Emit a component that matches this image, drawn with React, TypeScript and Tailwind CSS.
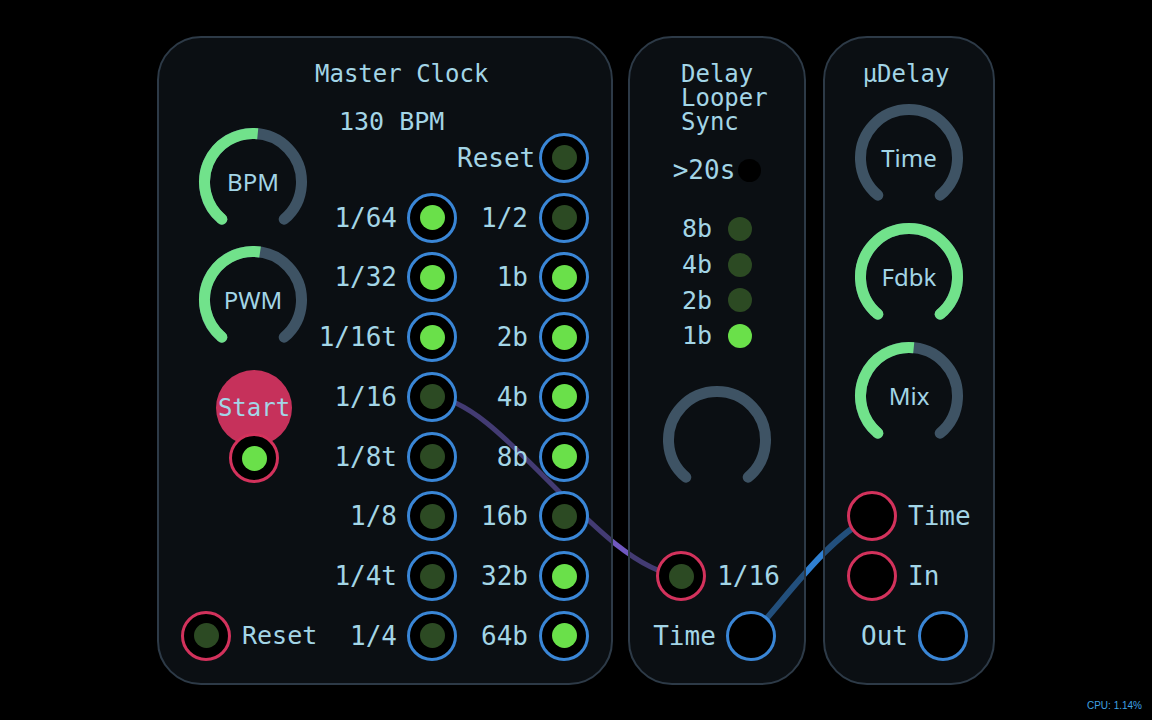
import React from 'react';

const MONO = "font-['DejaVu_Sans_Mono',monospace]";

function Knob({ value, label }: { value: number; label?: string }) {
  const cx = 55, cy = 55, r = 48.5;
  const start = -140, sweep = 280;
  const pt = (a: number) => {
    const rad = (a * Math.PI) / 180;
    return [cx + r * Math.sin(rad), cy - r * Math.cos(rad)];
  };
  const arc = (a0: number, a1: number) => {
    const [x0, y0] = pt(a0);
    const [x1, y1] = pt(a1);
    const large = a1 - a0 > 180 ? 1 : 0;
    return `M ${x0} ${y0} A ${r} ${r} 0 ${large} 1 ${x1} ${y1}`;
  };
  const end = start + sweep * value;
  const [sx, sy] = pt(start);
  const [ex, ey] = pt(start + sweep);
  return (
    <div className="relative w-[110px] h-[110px] shrink-0 flex items-center justify-center">
      <svg width="110" height="110" viewBox="0 0 110 110" className="absolute inset-0">
        <path d={arc(start, start + sweep)} fill="none" stroke="#3e5364" strokeWidth="11" strokeLinecap="round" />
        {value > 0 && (
          <>
            <path d={arc(start, end)} fill="none" stroke="#71e28b" strokeWidth="11" />
            <circle cx={sx} cy={sy} r="5.5" fill="#71e28b" />
            {value >= 1 && <circle cx={ex} cy={ey} r="5.5" fill="#71e28b" />}
          </>
        )}
      </svg>
      {label && (
        <span className="relative text-[24px] leading-none text-[#a3d5e6] font-['Noto_Sans',sans-serif]">{label}</span>
      )}
    </div>
  );
}

function Jack({ ring, led }: { ring: 'blue' | 'pink'; led?: 'on' | 'off' }) {
  return (
    <div
      className={`relative w-[50px] h-[50px] shrink-0 rounded-full border-[3.5px] bg-black flex items-center justify-center ${
        ring === 'blue' ? 'border-[#3a86d6]' : 'border-[#d3325c]'
      }`}
    >
      {led && <div className={`w-[25px] h-[25px] rounded-full ${led === 'on' ? 'bg-[#6ae04a]' : 'bg-[#2c4a23]'}`} />}
    </div>
  );
}

function Led({ on }: { on: boolean }) {
  return <div className={`w-[24px] h-[24px] rounded-full shrink-0 ${on ? 'bg-[#6ae04a]' : 'bg-[#2c4a23]'}`} />;
}

type Cell = [string, 'on' | 'off'] | null;

const rows: [Cell, Cell][] = [
  [null, ['Reset', 'off']],
  [['1/64', 'on'], ['1/2', 'off']],
  [['1/32', 'on'], ['1b', 'on']],
  [['1/16t', 'on'], ['2b', 'on']],
  [['1/16', 'off'], ['4b', 'on']],
  [['1/8t', 'off'], ['8b', 'on']],
  [['1/8', 'off'], ['16b', 'off']],
  [['1/4t', 'off'], ['32b', 'on']],
  [['1/4', 'off'], ['64b', 'on']],
];

const panel = 'relative h-[649px] rounded-[44px] border-2 border-[#2d3a47] bg-[rgba(22,30,38,0.5)] flex flex-col shrink-0';

export default function App() {
  return (
    <div className={`relative w-[1152px] h-[720px] bg-black overflow-hidden flex flex-col text-[#a3d5e6] ${MONO}`}>
      {/* patch cables, under the panels */}
      <svg className="absolute inset-0" width="1152" height="720">
        <path d="M432 397 C 500 397, 600 570, 681 576" fill="none" stroke="#7058c0" strokeWidth="5" />
        <path d="M751 636 C 785 600, 825 540, 872 516" fill="none" stroke="#2f80d2" strokeWidth="6" />
      </svg>

      <div className="flex pt-[36px] pl-[157px]">
        {/* Master Clock */}
        <div className={`${panel} w-[456px]`}>
          <div className="mt-[24px] ml-[156px] text-[24px] leading-[24px]">Master Clock</div>
          <div className="mt-[24px] ml-[180px] text-[25px] leading-[24px]">130 BPM</div>
          <div className="-mt-[6px] flex">
            <div className="w-[159px] flex flex-col">
              <div className="-mt-[1px] ml-[39px]">
                <Knob value={0.52} label="BPM" />
              </div>
              <div className="mt-[8px] ml-[39px]">
                <Knob value={0.53} label="PWM" />
              </div>
              <div className="mt-[15px] ml-[57px] w-[76px] h-[76px] rounded-full bg-[#c6315b] flex items-center justify-center text-[24px]">
                Start
              </div>
              <div className="-mt-[13px] ml-[70px]">
                <Jack ring="pink" led="on" />
              </div>
              <div className="flex-1" />
              <div className="h-[59.75px] flex items-center pl-[22px] gap-[11px]">
                <Jack ring="pink" led="off" />
                <span className="text-[25px]">Reset</span>
              </div>
            </div>
            <div className="flex flex-col">
              {rows.map(([a, b], i) => (
                <div key={i} className="h-[59.75px] flex items-center">
                  <div className="w-[79px] text-right text-[26px] leading-[30px]">{a ? a[0] : ''}</div>
                  <div className="ml-[10px] w-[50px]">{a && <Jack ring="blue" led={a[1]} />}</div>
                  <div className="w-[71px] text-right text-[26px] leading-[30px]">{b ? b[0] : ''}</div>
                  <div className="ml-[11px]">{b && <Jack ring="blue" led={b[1]} />}</div>
                </div>
              ))}
            </div>
          </div>
        </div>

        {/* Delay Looper Sync */}
        <div className={`${panel} w-[178px] ml-[15px] items-center`}>
          <div className="self-start mt-[24px] ml-[51px] text-[24px] leading-[24px] flex flex-col">
            <span className="h-[24px]">Delay</span>
            <span className="h-[24px]">Looper</span>
            <span className="h-[24px]">Sync</span>
          </div>
          <div className="mt-[24px] h-[24px] flex items-center gap-[3px] text-[26px]">
            <span>&gt;20s</span>
            <div className="w-[23px] h-[23px] rounded-full bg-black" />
          </div>
          <div className="mt-[35px] flex flex-col gap-[11.67px]">
            {[['8b', false], ['4b', false], ['2b', false], ['1b', true]].map(([l, on]) => (
              <div key={l as string} className="h-[24px] flex items-center gap-[16px] text-[25px]">
                <span>{l as string}</span>
                <Led on={on as boolean} />
              </div>
            ))}
          </div>
          <div className="mt-[37px]">
            <Knob value={0} />
          </div>
          <div className="flex-1" />
          <div className="flex flex-col gap-[10px] pb-[22px]">
            <div className="flex items-center gap-[11px] pl-[2px]">
              <Jack ring="pink" led="off" />
              <span className="text-[26px]">1/16</span>
            </div>
            <div className="flex items-center gap-[10px] -ml-[1px]">
              <span className="text-[26px]">Time</span>
              <Jack ring="blue" />
            </div>
          </div>
        </div>

        {/* µDelay */}
        <div className={`${panel} w-[172px] ml-[17px] items-center`}>
          <div className="mt-[24px] mr-[6px] text-[24px] leading-[24px]">µDelay</div>
          <div className="mt-[17px]">
            <Knob value={0} label="Time" />
          </div>
          <div className="mt-[9px]">
            <Knob value={1} label="Fdbk" />
          </div>
          <div className="mt-[9px]">
            <Knob value={0.52} label="Mix" />
          </div>
          <div className="flex-1" />
          <div className="self-stretch flex flex-col gap-[10px] pb-[22px] text-[26px]">
            <div className="flex items-center gap-[11px] pl-[22px]">
              <Jack ring="pink" />
              <span>Time</span>
            </div>
            <div className="flex items-center gap-[11px] pl-[22px]">
              <Jack ring="pink" />
              <span>In</span>
            </div>
            <div className="flex items-center gap-[10px] pl-[36px]">
              <span>Out</span>
              <Jack ring="blue" />
            </div>
          </div>
        </div>
      </div>

      <div className="mt-[15px] pr-[10px] flex justify-end text-[10px] leading-[12px] text-[#3fa2e2] font-['Liberation_Sans',Arial,sans-serif]">
        CPU: 1.14%
      </div>
    </div>
  );
}
